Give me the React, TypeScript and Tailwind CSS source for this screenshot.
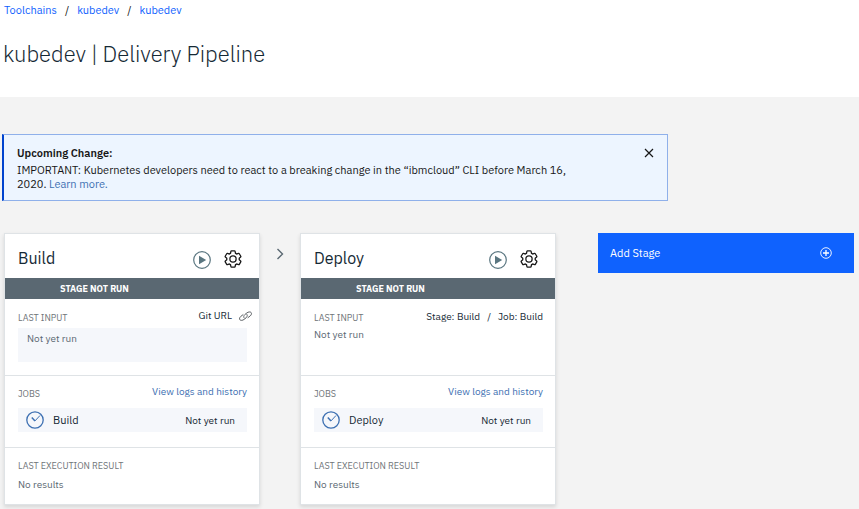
import React from 'react';

const gearPath =
  'M27,16.76c0-.25,0-.5,0-.76s0-.51,0-.77l1.92-1.68A2,2,0,0,0,29.3,11L26.94,7a2,2,0,0,0-1.73-1,2,2,0,0,0-.64.1l-2.43.82a11.35,11.35,0,0,0-1.31-.75l-.51-2.52a2,2,0,0,0-2-1.61H13.64a2,2,0,0,0-2,1.61l-.51,2.52a11.48,11.48,0,0,0-1.32.75L7.43,6.06A2,2,0,0,0,6.79,6,2,2,0,0,0,5.06,7L2.7,11a2,2,0,0,0,.41,2.51L5,15.24c0,.25,0,.5,0,.76s0,.51,0,.77L3.11,18.45A2,2,0,0,0,2.7,21L5.06,25a2,2,0,0,0,1.73,1,2,2,0,0,0,.64-.1l2.43-.82a11.35,11.35,0,0,0,1.31.75l.51,2.52a2,2,0,0,0,2,1.61h4.72a2,2,0,0,0,2-1.61l.51-2.52a11.48,11.48,0,0,0,1.32-.75l2.42.82a2,2,0,0,0,.64.1,2,2,0,0,0,1.73-1L29.3,21a2,2,0,0,0-.41-2.51ZM25.21,24l-3.43-1.16a8.86,8.86,0,0,1-2.71,1.57L18.36,28H13.64l-.71-3.55a9.36,9.36,0,0,1-2.7-1.57L6.79,24,4.43,20l2.72-2.4a8.9,8.9,0,0,1,0-3.13L4.43,12,6.79,8l3.43,1.16a8.86,8.86,0,0,1,2.71-1.57L13.64,4h4.72l.71,3.55a9.36,9.36,0,0,1,2.7,1.57L25.21,8,27.57,12l-2.72,2.4a8.9,8.9,0,0,1,0,3.13L27.57,20Z';

function GearIcon() {
  return (
    <svg viewBox="0 0 32 32" className="size-5" fill="#171717" aria-hidden="true">
      <path d={gearPath} />
      <path d="M16,22a6,6,0,1,1,6-6A5.94,5.94,0,0,1,16,22Zm0-10a3.91,3.91,0,0,0-4,4,3.91,3.91,0,0,0,4,4,3.91,3.91,0,0,0,4-4A3.91,3.91,0,0,0,16,12Z" />
    </svg>
  );
}

function PlayIcon() {
  return (
    <svg viewBox="0 0 18 18" className="size-[18px]" aria-hidden="true">
      <circle cx="9" cy="9" r="8.3" fill="none" stroke="#5a7680" strokeWidth="1.2" />
      <path d="M6 4.8v8.4L13.2 9z" fill="#5a7680" />
    </svg>
  );
}

function LinkIcon() {
  return (
    <svg viewBox="0 0 14 12" className="h-3 w-3.5" fill="none" stroke="#5f6468" strokeWidth="1" strokeLinecap="round" aria-hidden="true">
      <path d="M5.4 8.200C4.300 7.500 4.500 5.800 5.900 4.500L7.900 2.900C9.300 1.800 11.300 1.600 12.100 2.500s.3 2.500-1 3.500L9 7.600" />
      <path d="M7.600 4.100c1.100.7.9 2.400-.5 3.700L5.100 9.400C3.700 10.500 1.700 10.700.9 9.800s-.3-2.500 1-3.500L4 4.700" />
    </svg>
  );
}

function JobIcon() {
  return (
    <svg viewBox="0 0 18 18" className="size-[18px]" fill="none" stroke="#3d70b2" aria-hidden="true">
      <circle cx="9" cy="9" r="8.2" strokeWidth="1.300" />
      <path d="M5.800 6.500 9 9.900" strokeWidth="1.500" />
      <path d="M9 9.900 14 4.500" strokeWidth="1" />
    </svg>
  );
}

type StageProps = {
  name: string;
  source: React.ReactNode;
  input: React.ReactNode;
};

const label = 'text-[9px] leading-3 text-[#6f7478]';

function Stage({ name, source, input }: StageProps) {
  return (
    <section aria-label={name} className="w-64 shrink-0 border border-[#dfe3e6] bg-white shadow-[0_2px_4px_rgba(0,0,0,0.12)]">
      <header className="flex h-11 items-center pt-1 pr-4 pl-[13px]">
        <h2 className="mr-auto text-base leading-6 text-[#152935]">{name}</h2>
        <button type="button" aria-label={`Run ${name}`} className="mt-1 mr-3">
          <PlayIcon />
        </button>
        <button type="button" aria-label={`Configure ${name}`} className="mt-0.5">
          <GearIcon />
        </button>
      </header>
      <p className="h-[21px] bg-[#5a6872] pl-[55px] text-[9px] leading-[21px] font-bold text-white">STAGE NOT RUN</p>

      <div className="flex h-[76px] flex-col pt-[11px] pr-3 pl-[13px]">
        <div className="flex items-start justify-between">
          <h3 className={`${label} mt-0.5`}>LAST INPUT</h3>
          {source}
        </div>
        {input}
      </div>

      <div className="h-[72px] border-t border-[#dfe3e6] pt-2.5 pr-3 pl-[13px]">
        <div className="flex items-start justify-between">
          <h3 className={`${label} mt-0.5`}>JOBS</h3>
          <a href="#logs" className="text-[10px] leading-3 text-[#3d70b2]">View logs and history</a>
        </div>
        <div className="mt-2 flex h-6 items-center bg-[#f5f7fb] pr-3 pl-2">
          <JobIcon />
          <span className="ml-[9px] text-[11px] text-[#152935]">{name}</span>
          <span className="ml-auto text-[10px] text-[#152935]">Not yet run</span>
        </div>
      </div>

      <div className="h-[57px] border-t border-[#dfe3e6] pt-3 pl-[13px]">
        <h3 className={label}>LAST EXECUTION RESULT</h3>
        <p className="mt-[7px] text-[10px] leading-3 text-[#5a6872]">No results</p>
      </div>
    </section>
  );
}

export default function App() {
  return (
    <div className="flex min-h-screen flex-col bg-[#f3f3f3] font-['IBM_Plex_Sans',Inter,sans-serif]">
      <header className="h-[97px] bg-white px-[3px] pt-0.5">
        <nav aria-label="Breadcrumb" className="flex gap-2 pl-px text-[11px] leading-4 text-[#171717]">
          <a href="#toolchains" className="text-[#0f62fe]">Toolchains</a>
          <span>/</span>
          <a href="#toolchain" className="text-[#0f62fe]">kubedev</a>
          <span>/</span>
          <a href="#pipeline" className="text-[#0f62fe]">kubedev</a>
        </nav>
        <h1 className="mt-5 text-[22px] leading-8 font-light text-[#152935]">kubedev | Delivery Pipeline</h1>
      </header>

      <main className="flex-1 overflow-hidden pt-[37px]">
        <aside className="ml-0.5 flex max-w-[666px] items-start justify-between border border-l-2 border-[#8fb0ea] border-l-[#0043ce] bg-[#edf5ff] pt-[11px] pr-3 pb-[9px] pl-[13px] text-[11px] leading-[14px] text-[#171717]">
          <div className="max-w-[575px]">
            <h2 className="font-semibold">Upcoming Change:</h2>
            <p className="mt-[3px]">
              IMPORTANT: Kubernetes developers need to react to a breaking change in the “ibmcloud” CLI before March 16, 2020.{' '}
              <a href="#learn-more" className="text-[#3d70b2]">Learn more.</a>
            </p>
          </div>
          <button type="button" aria-label="Dismiss" className="flex h-3.5 w-3 items-center justify-center">
            <svg viewBox="0 0 10 10" className="size-2.5" stroke="#171717" strokeWidth="1.200" aria-hidden="true">
              <path d="M1 1l8 8M9 1l-8 8" />
            </svg>
          </button>
        </aside>

        <div className="mt-8 flex items-start pr-[5px] pb-1 pl-1">
          <Stage
            name="Build"
            source={
              <a href="#git" className="-mr-1.5 flex items-center gap-[7px] text-[10px] leading-3 text-[#152935]">
                Git URL
                <LinkIcon />
              </a>
            }
            input={<p className="mt-1 h-[34px] bg-[#f5f7fb] px-[9px] pt-[5px] text-[10px] leading-3 text-[#5a6872]">Not yet run</p>}
          />
          <div className="flex h-[42px] w-10 shrink-0 items-center justify-center">
            <svg viewBox="0 0 8 12" className="h-3 w-2" fill="none" stroke="#5a6872" strokeWidth="1.400" aria-hidden="true">
              <path d="M1.500 1l5 5-5 5" />
            </svg>
          </div>
          <Stage
            name="Deploy"
            source={
              <p className="flex gap-[7px] text-[10px] leading-[14px] text-[#152935]">
                <span>Stage: Build</span>
                <span>/</span>
                <span>Job: Build</span>
              </p>
            }
            input={<p className="mt-[5px] text-[10px] leading-3 text-[#5a6872]">Not yet run</p>}
          />
          <button type="button" className="ml-[42px] flex h-10 w-64 shrink-0 items-center justify-between bg-[#0f62fe] pr-[22px] pl-3 text-[11px] text-white">
            Add Stage
            <svg viewBox="0 0 12 12" className="size-3" fill="none" stroke="white" aria-hidden="true">
              <circle cx="6" cy="6" r="5.300" strokeWidth=".9" />
              <path d="M6 3v6M3 6h6" strokeWidth="1.300" />
            </svg>
          </button>
        </div>
      </main>
    </div>
  );
}
